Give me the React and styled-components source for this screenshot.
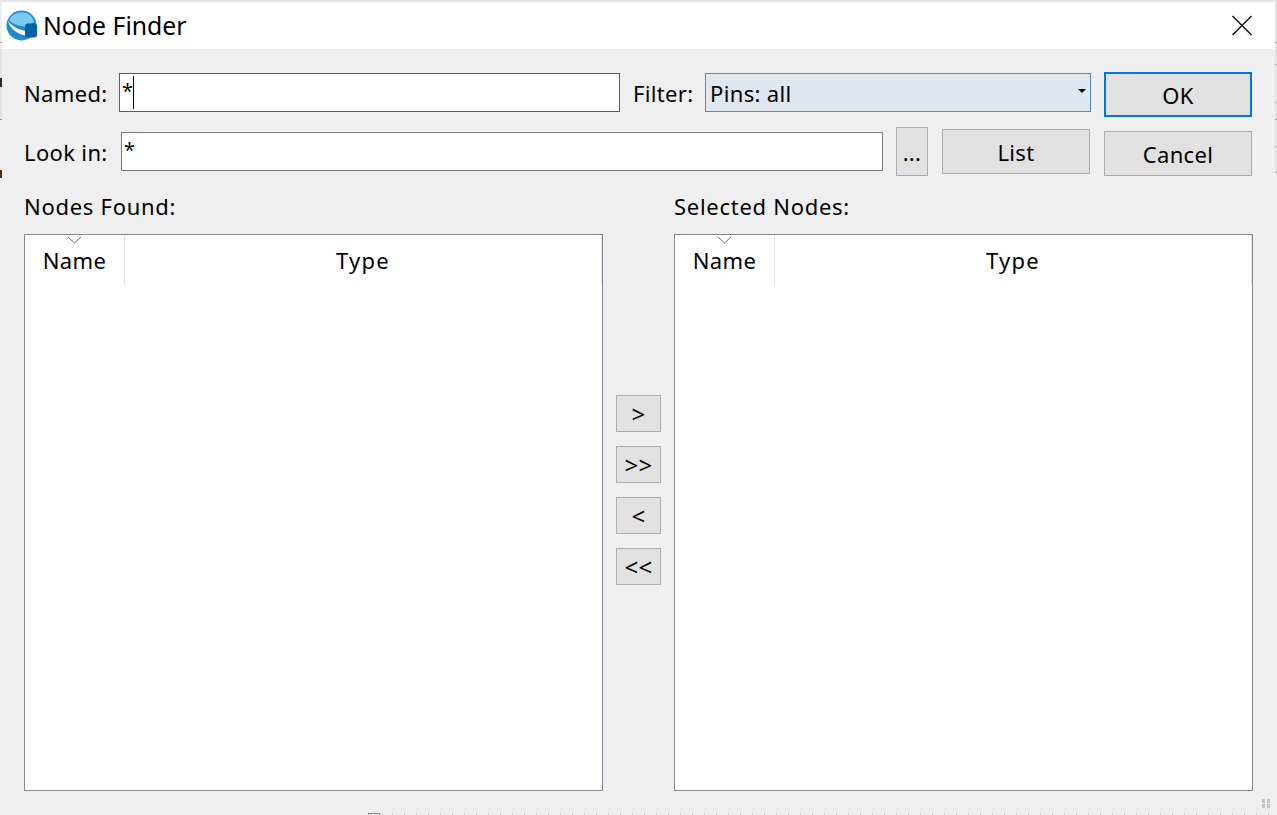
import React from "react";
import styled, { createGlobalStyle } from "styled-components";

const GlobalStyle = createGlobalStyle`
    html, body {
        margin: 0;
        padding: 0;
        background: #efefef;
    }
`;

const Dialog = styled.div`
    width: 1277px;
    height: 815px;
    box-sizing: border-box;
    overflow: hidden;
    display: flex;
    flex-direction: column;
    position: relative;
    background: #efefef;
    border-top: 2px solid #e6e6e6;
    font-family: "Noto Sans", sans-serif;
    font-size: 22px;
    letter-spacing: 0.35px;
    color: #000;
`;

const TitleBar = styled.div`
    height: 47px;
    margin: 0 2px;
    background: #fff;
    display: flex;
    align-items: center;
    padding-left: 4px;
`;

const TitleText = styled.span`
    font-size: 24.8px;
    letter-spacing: 0;
    line-height: 44px;
    margin-left: 4px;
    margin-bottom: 2px;
    flex: 1;
`;

const CloseButton = styled.div`
    width: 22px;
    height: 22px;
    margin-right: 22px;
    display: flex;
`;

const Body = styled.div`
    flex: 1;
    display: flex;
    flex-direction: column;
    padding: 24px 24px 0 24px;
`;

const TopGrid = styled.div`
    display: flex;
    gap: 14px;
`;

const Fields = styled.div`
    width: 1066px;
    display: flex;
    flex-direction: column;
`;

const Row = styled.div`
    display: flex;
    align-items: center;
    height: ${(p) => p.$height}px;
    margin-top: ${(p) => p.$top || 0}px;
`;

const Label = styled.span`
    width: ${(p) => p.$width}px;
    margin-left: ${(p) => p.$left || 0}px;
    flex: none;
    line-height: 40px;
    white-space: nowrap;
`;

const TextBox = styled.div`
    width: ${(p) => p.$width}px;
    height: 39px;
    box-sizing: border-box;
    background: #fff;
    border: 1px solid ${(p) => (p.$active ? "#1a6fb5" : "#7a7a7a")};
    padding-left: 2px;
    display: flex;
    align-items: flex-start;
    line-height: 34px;
    font-size: 20px;
    flex: none;
`;

const Caret = styled.span`
    width: 1px;
    height: 33px;
    margin-top: 2px;
    background: #000;
`;

const Select = styled.div`
    width: 386px;
    height: 39px;
    box-sizing: border-box;
    background: #e1e7ef;
    border: 1px solid #4a8fc4;
    padding: 0 4px 0 4px;
    display: flex;
    align-items: center;
    justify-content: space-between;
    flex: none;
`;

const SelectArrow = styled.span`
    width: 0;
    height: 0;
    border-left: 4px solid transparent;
    border-right: 4px solid transparent;
    border-top: 4px solid #000;
    margin-bottom: 3px;
`;

const Button = styled.div`
    width: ${(p) => p.$width}px;
    height: ${(p) => p.$height}px;
    margin-left: ${(p) => p.$left || 0}px;
    box-sizing: border-box;
    background: #e1e1e1;
    border: ${(p) => (p.$primary ? "2px solid #0078d7" : "1px solid #adadad")};
    display: flex;
    align-items: center;
    justify-content: center;
    flex: none;
`;

const Actions = styled.div`
    display: flex;
    flex-direction: column;
    gap: 14px;
    margin-top: -1px;
`;

const Lists = styled.div`
    display: flex;
    margin-top: 14px;
`;

const ListColumn = styled.div`
    width: 579px;
    flex: none;
    display: flex;
    flex-direction: column;
`;

const ListTitle = styled.div`
    height: 44px;
    line-height: 32px;
    letter-spacing: 0.72px;
`;

const ListBox = styled.div`
    height: 557px;
    box-sizing: border-box;
    background: #fff;
    border: 1px solid #828790;
`;

const Header = styled.div`
    display: flex;
    height: 50px;
`;

const HeaderCell = styled.div`
    position: relative;
    box-sizing: border-box;
    border-right: 1px solid #e5e5e5;
    text-align: center;
    line-height: 50px;
    width: ${(p) => (p.$grow ? "auto" : "100px")};
    flex: ${(p) => (p.$grow ? 1 : "none")};
    letter-spacing: ${(p) => (p.$grow ? "1.2px" : "0.35px")};
`;

const SortMark = styled.svg`
    position: absolute;
    top: 1px;
    left: 42px;
    width: 15px;
    height: 8px;
`;

const Transfer = styled.div`
    width: 71px;
    flex: none;
    display: flex;
    flex-direction: column;
    align-items: center;
    gap: 14px;
    padding-top: 205px;
    box-sizing: border-box;
    font-size: 24px;
`;

const Grip = styled.svg`
    position: absolute;
    right: 6px;
    bottom: 6px;
    width: 9px;
    height: 10px;
`;

const Ruler = styled.div`
    position: absolute;
    left: 368px;
    right: 0;
    bottom: 0;
    height: 2px;
    background: repeating-linear-gradient(90deg, #c4c4c4 0 1px, transparent 1px 12px);
`;

const RulerMark = styled.div`
    position: absolute;
    left: 368px;
    bottom: 0;
    width: 12px;
    height: 2px;
    box-sizing: border-box;
    border: 1px solid #8a8a8a;
    border-bottom: 0;
`;

// bits of the window behind the dialog, showing at its two edges
const BehindLeft = styled.div`
    position: absolute;
    left: 0;
    top: -2px;
    width: 2px;
    height: 180px;
    background:
        linear-gradient(#a8a8a8, #a8a8a8) 0 42px / 2px 1px no-repeat,
        linear-gradient(#8f8f8f, #8f8f8f) 0 119px / 2px 1px no-repeat,
        linear-gradient(#2a2a2a, #2a2a2a) 0 78px / 2px 9px no-repeat,
        linear-gradient(#5a2a10, #5a2a10) 0 170px / 2px 8px no-repeat,
        linear-gradient(#e2e2e2, #e2e2e2) 0 49px / 2px 70px no-repeat;
`;

const BehindRight = styled.div`
    position: absolute;
    right: 0;
    top: -2px;
    width: 2px;
    height: 180px;
    background:
        linear-gradient(#a8a8a8, #a8a8a8) 0 42px / 2px 1px no-repeat,
        linear-gradient(#a8a8a8, #a8a8a8) 0 64px / 2px 1px no-repeat,
        linear-gradient(#a8a8a8, #a8a8a8) 0 102px / 2px 1px no-repeat,
        linear-gradient(#8f8f8f, #8f8f8f) 0 119px / 2px 1px no-repeat,
        linear-gradient(#a8a8a8, #a8a8a8) 0 146px / 2px 1px no-repeat,
        linear-gradient(#a8a8a8, #a8a8a8) 0 172px / 2px 1px no-repeat,
        linear-gradient(#e2e2e2, #e2e2e2) 0 0 / 2px 172px no-repeat;
`;

const AppIcon = () => (
    <svg width="33" height="33" viewBox="0 0 33 33">
        <circle cx="15.5" cy="16.5" r="15" fill="#1e8ccd" />
        <path d="M3 11 C6 5 12 3 17 3.5 C23 4 27 8 28 13 L20 18 C13 17 7 15 3 11Z" fill="#7cc9f1" />
        <path d="M2 12 C7 18 13 21 20 22 L20 26.5 C12 25.5 4 20 2 12Z" fill="#fff" />
        <rect x="19" y="14.5" width="12" height="14" rx="3" fill="#0063a9" />
    </svg>
);

const ListPanel = ({ title }) => (
    <ListColumn>
        <ListTitle>{title}</ListTitle>
        <ListBox>
            <Header>
                <HeaderCell>
                    <SortMark viewBox="0 0 15 8">
                        <path d="M1 1 L7.5 7 L14 1" fill="none" stroke="#6d6d6d" strokeWidth="1" />
                    </SortMark>
                    Name
                </HeaderCell>
                <HeaderCell $grow>Type</HeaderCell>
            </Header>
        </ListBox>
    </ListColumn>
);

const transferLabels = [">", ">>", "<", "<<"];

export default function App() {
    return (
        <Dialog>
            <GlobalStyle />
            <TitleBar>
                <AppIcon />
                <TitleText>Node Finder</TitleText>
                <CloseButton>
                    <svg width="22" height="22" viewBox="0 0 22 22">
                        <path d="M1.5 1 L20.5 20 M20.5 1 L1.5 20" stroke="#1a1a1a" strokeWidth="1.6" />
                    </svg>
                </CloseButton>
            </TitleBar>
            <Body>
                <TopGrid>
                    <Fields>
                        <Row $height={39}>
                            <Label $width={95}>Named:</Label>
                            <TextBox $width={501} $active>
                                *<Caret />
                            </TextBox>
                            <Label $width={72} $left={13}>Filter:</Label>
                            <Select>
                                Pins: all
                                <SelectArrow />
                            </Select>
                        </Row>
                        <Row $height={49} $top={15}>
                            <Label $width={97}>Look in:</Label>
                            <TextBox $width={762}>*</TextBox>
                            <Button $width={32} $height={49} $left={13}>...</Button>
                            <Button $width={148} $height={45} $left={14}>List</Button>
                        </Row>
                    </Fields>
                    <Actions>
                        <Button $width={148} $height={45} $primary>OK</Button>
                        <Button $width={148} $height={45}>Cancel</Button>
                    </Actions>
                </TopGrid>
                <Lists>
                    <ListPanel title="Nodes Found:" />
                    <Transfer>
                        {transferLabels.map((label) => (
                            <Button key={label} $width={45} $height={37}>{label}</Button>
                        ))}
                    </Transfer>
                    <ListPanel title="Selected Nodes:" />
                </Lists>
            </Body>
            <Grip viewBox="0 0 9 10">
                <path d="M0 0h3v4H0zM5 0h3v4H5zM0 5h3v4H0zM5 5h3v4H5z" fill="#c4c4c4" />
            </Grip>
            <Ruler />
            <RulerMark />
            <BehindLeft />
            <BehindRight />
        </Dialog>
    );
}
